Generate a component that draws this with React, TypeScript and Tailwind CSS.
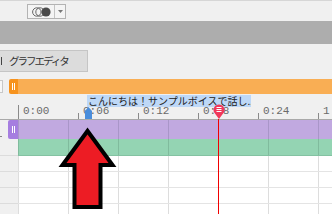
import React from "react";

const cols = [0, 1, 2, 3, 4, 5, 6];
const marks = ["0:00", "0:06", "0:12", "0:18", "0:24", "1"];

function Cells({ bg, line, edge }: { bg: string; line: string; edge: string }) {
  return (
    <div className={`flex flex-1 overflow-hidden ${bg} ${edge}`}>
      {cols.map((i) => (
        <div key={i} className={`w-[50px] shrink-0 border-l ${line}`} />
      ))}
    </div>
  );
}

function Grip({ color, w }: { color: string; w: string }) {
  return (
    <div className={`${w} ${color} rounded-l-[2px] flex items-center justify-center gap-[1px]`}>
      <div className="w-px h-[7px] bg-white" />
      <div className="w-px h-[7px] bg-white" />
    </div>
  );
}

export default function App() {
  return (
    <div className="relative w-[332px] h-[214px] overflow-hidden bg-[#f0f0f0] font-['Noto_Sans_CJK_JP',sans-serif] select-none">
      {/* toolbar */}
      <div className="h-[21px] border-t border-[#d6d6d6] pl-[27px] pt-[3px]">
        <div className="flex w-[39px] h-[15px] border border-[#b3b3b3] bg-[#f4f4f4]">
          <div className="w-[27px] flex items-center justify-center border-r border-[#c4c4c4]">
            <svg width="19" height="10" viewBox="0 0 19 10">
              <circle cx="4.8" cy="5" r="4.2" fill="none" stroke="#666" strokeWidth="1" />
              <circle cx="8" cy="5" r="4.2" fill="none" stroke="#666" strokeWidth="1" />
              <circle cx="14" cy="5" r="4.6" fill="#4a4a4a" />
            </svg>
          </div>
          <div className="flex-1 flex items-center justify-center">
            <svg width="5" height="3" viewBox="0 0 5 3">
              <path d="M0 0H5L2.5 3Z" fill="#777" />
            </svg>
          </div>
        </div>
      </div>

      {/* gray band */}
      <div className="h-[23px] bg-[#adadad]" />

      {/* tab */}
      <div className="h-[35px] pt-[6px]">
        <div className="flex items-center w-[90px] h-[22px] -ml-[2px] bg-[#dcdcdc] border border-[#c5c5c5]">
          <div className="ml-[2px] w-px h-[8px] bg-[#444]" />
          <span className="ml-[7px] text-[10.5px] tracking-[-2px] text-[#333] leading-none">グラフエディタ</span>
        </div>
      </div>

      {/* orange track */}
      <div className="flex h-[15px]">
        <div className="w-[9px] flex items-center">
          <div className="w-[3px] h-[13px] border border-l-0 border-[#c8c8c8] bg-[#f7f7f7]" />
        </div>
        <Grip color="bg-[#f7931e]" w="w-[9px]" />
        <div className="flex-1 bg-[#f9ae54]" />
      </div>

      {/* ruler */}
      <div className="relative h-[26px] border-b border-[#a9a9a9] flex items-end pl-[18px]">
        {marks.map((m, i) => (
          <div key={m} className="w-[60px] shrink-0 flex items-end">
            <div className={`w-px bg-[#8a8a8a] ${i === 0 ? "h-[14px]" : "h-[6px]"}`} />
            <span className="ml-[4px] mb-[2px] font-['Liberation_Mono',monospace] text-[11px] leading-[11px] text-[#6a6a6a]">
              {m}
            </span>
          </div>
        ))}
        <div className="absolute left-[87px] top-[1px] h-[12px] w-[164px] bg-[#bed8f7] pl-px text-[10px] leading-[12px] text-[#222] whitespace-nowrap overflow-hidden">
          こんにちは！サンプルボイスで話し...
        </div>
        <svg className="absolute left-[85px] top-[13px]" width="7" height="12" viewBox="0 0 7 12">
          <path d="M3.5 0L7 4V12H0V4Z" fill="#4a8ddb" />
        </svg>
      </div>

      {/* purple track */}
      <div className="flex h-[19px]">
        <div className="w-[8px] flex items-end pb-[2px]">
          <div className="w-[2px] h-px bg-[#888]" />
        </div>
        <Grip color="bg-[#a67ee0]" w="w-[10px]" />
        <Cells bg="bg-[#c1a9e0]" line="border-[#a996c8]" edge="" />
      </div>

      {/* green track */}
      <div className="flex h-[17px]">
        <div className="w-[18px] border-b border-[#dcdcdc]" />
        <Cells bg="bg-[#94d4b3]" line="border-[#80bb9d]" edge="border-b border-[#84c2a2]" />
      </div>

      {/* empty rows */}
      {[0, 1, 2, 3].map((r) => (
        <div key={r} className="flex h-[16px]">
          <div className="w-[18px] border-b border-[#dcdcdc]" />
          <Cells bg="bg-white" line="border-[#dddddd]" edge="border-b border-[#e4e4e4]" />
        </div>
      ))}

      {/* playhead */}
      <div className="absolute left-[212px] top-[104px] w-[13px] h-[110px] flex flex-col items-center">
        <svg width="12" height="15" viewBox="0 0 12 15" className="shrink-0">
          <path d="M6 15L1.2 8.6A5.5 5.5 0 1 1 10.8 8.6Z" fill="#f0385b" />
          <rect x="3.5" y="3" width="5" height="1" fill="#fff" />
          <rect x="3.5" y="5" width="5" height="1" fill="#fff" />
          <rect x="3.5" y="7" width="5" height="1" fill="#fff" />
        </svg>
        <div className="w-px flex-1 bg-[#f20000]" />
      </div>

      {/* annotation arrow */}
      <svg className="absolute left-0 top-0 pointer-events-none" width="332" height="214" viewBox="0 0 332 214">
        <path
          d="M87.5 131L62.5 165H74.5V207H100.5V165H112.5Z"
          fill="#ed1c24"
          stroke="#000"
          strokeWidth="4"
          strokeLinejoin="miter"
        />
      </svg>
    </div>
  );
}
